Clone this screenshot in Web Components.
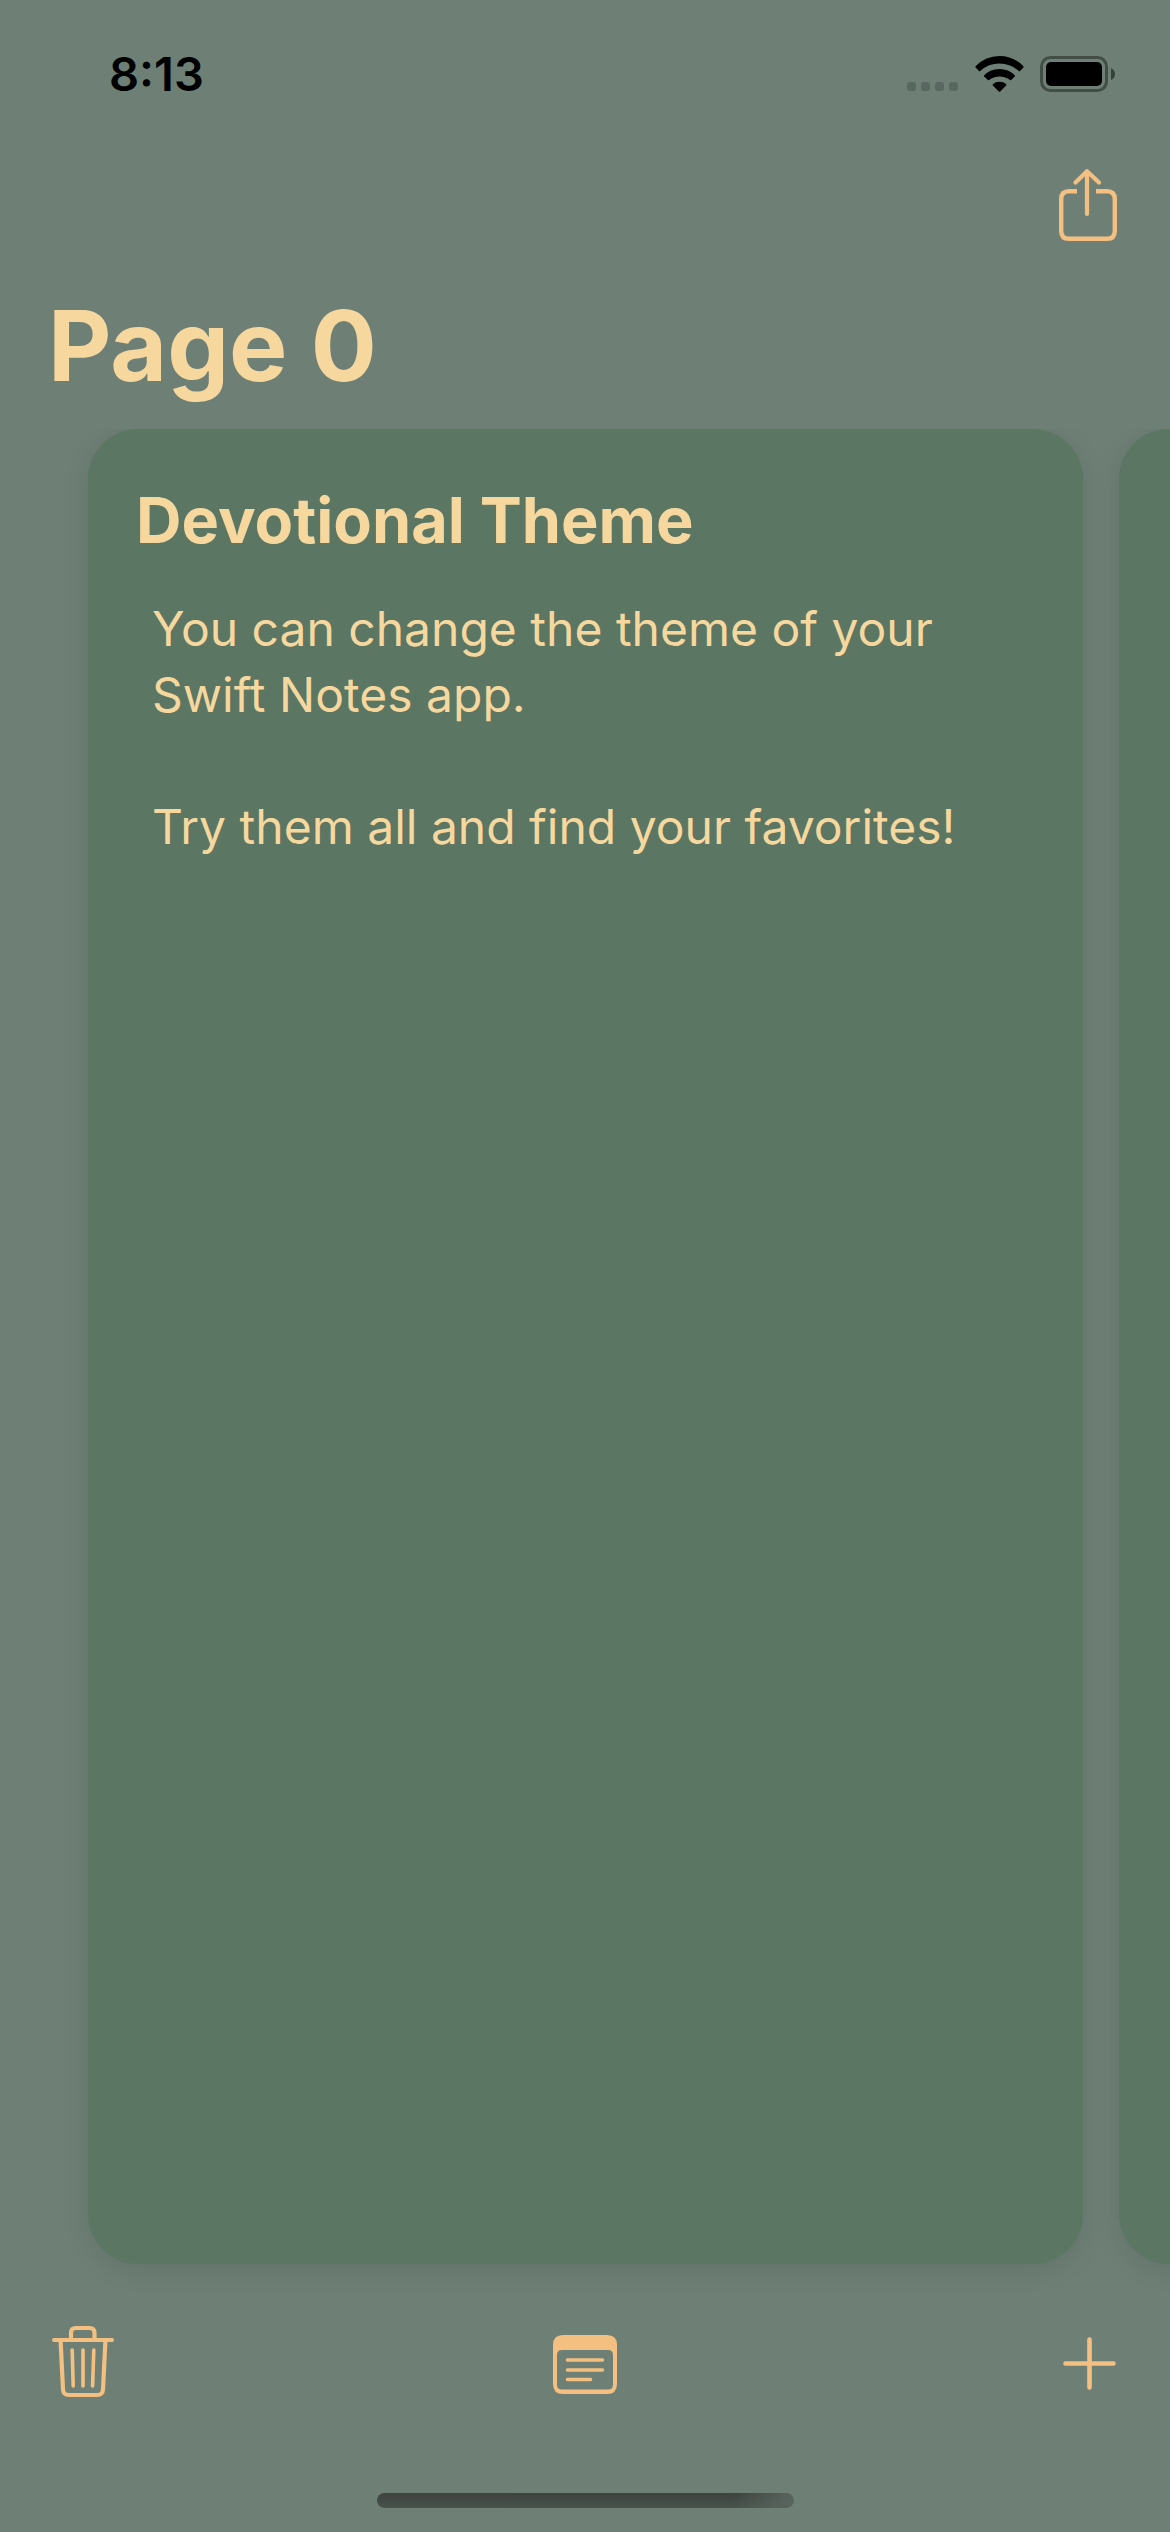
<!DOCTYPE html>
<html lang="en">
<head>
<meta charset="utf-8">
<meta name="viewport" content="width=device-width, initial-scale=1">
<title>Swift Notes</title>
<style>
  :root {
    --page: #6e8076;
    --card: #5b7663;
    --text: #f6d89f;
    --accent: #f3c081;
  }
  body {
    margin: 0;
    background: var(--page);
    color: var(--text);
    font-family: Inter, "Liberation Sans", sans-serif;
  }
</style>
</head>
<body>
<notes-app></notes-app>

<script>
  class BaseElement extends HTMLElement {
    constructor() {
      super();
      this.attachShadow({ mode: "open" }).innerHTML = this.constructor.markup;
    }
  }

  class StatusBar extends BaseElement {
    static markup = `
      <style>
        :host { display: flex; justify-content: space-between; align-items: center; height: 148px; padding: 0 54px 0 109px; box-sizing: border-box; color: #000; }
        time { font-size: 47px; line-height: 56px; font-weight: 600; }
        .icons { display: flex; align-items: center; gap: 16px; }
        svg { display: block; }
      </style>
      <time>8:13</time>
      <div class="icons">
        <svg width="52" height="36" viewBox="0 0 52 36" aria-hidden="true">
          <g fill="#586860">
            <rect x="0" y="26" width="9" height="9" rx="3"/><rect x="14" y="26" width="9" height="9" rx="3"/>
            <rect x="28" y="26" width="9" height="9" rx="3"/><rect x="42" y="26" width="9" height="9" rx="3"/>
          </g>
        </svg>
        <svg width="49" height="36" viewBox="0 0 49 36" aria-hidden="true">
          <path d="M0.6 10.2Q10.5 0 24.5 0T48.400 10.2Q48.900 10.800 48.400 11.400L45 15Q44.400 15.500 43.800 15Q35.500 7.600 24.500 7.600T5.200 15Q4.600 15.500 4 15L0.600 11.400Q0.100 10.800 0.600 10.200Z"/>
          <path d="M9.200 19.200Q15.500 13 24.500 13T39.800 19.200Q40.300 19.800 39.800 20.400L36.200 24Q35.600 24.500 35 24Q30.500 20.400 24.500 20.400T14 24Q13.400 24.500 12.800 24L9.200 20.400Q8.700 19.800 9.200 19.200Z"/>
          <path d="M17.900 28Q20.600 25.700 24.500 25.700T31.100 28Q31.700 28.700 31.100 29.400L25.200 35.400Q24.500 36 23.800 35.400L17.900 29.400Q17.300 28.700 17.900 28Z"/>
        </svg>
        <svg width="76" height="36" viewBox="0 0 76 36" aria-hidden="true">
          <rect x="1.500" y="1.500" width="65" height="33" rx="9" fill="none" stroke="#000" stroke-opacity=".4" stroke-width="3"/>
          <rect x="6" y="6" width="56" height="24" rx="5"/>
          <path d="M71 12Q75 14 75 18T71 24Z" fill-opacity=".5"/>
        </svg>
      </div>`;
  }

  class IconButton extends BaseElement {
    static markup = `
      <style>
        :host { display: block; }
        button { display: block; margin: 0; padding: 0; border: 0; background: none; color: var(--accent); }
      </style>
      <button type="button"><slot></slot></button>`;
    connectedCallback() {
      this.shadowRoot.querySelector("button").setAttribute("aria-label", this.getAttribute("label"));
    }
  }

  class NoteCard extends BaseElement {
    static markup = `
      <style>
        :host { display: block; flex: 0 0 calc(100% - 87px); box-sizing: border-box; padding: 51px 48px; border-radius: 50px; background: var(--card); box-shadow: 0 6px 26px rgba(0, 0, 0, .1); }
        h2 { margin: 0 0 36px; font-size: 63px; line-height: 80px; font-weight: 700; }
        .body { padding: 0 16px; font-size: 48px; line-height: 66px; }
      </style>
      <h2><slot name="title"></slot></h2>
      <div class="body"><slot></slot></div>`;
  }

  class NotesApp extends BaseElement {
    static markup = `
      <style>
        :host { display: flex; flex-direction: column; min-height: 100vh; }
        header { display: flex; justify-content: flex-end; padding: 18px 52px 0; height: 134px; box-sizing: border-box; }
        h1 { margin: 0; padding: 0 48px; font-size: 98px; line-height: 127px; font-weight: 700; height: 147px; box-sizing: border-box; }
        main { flex: 1; display: flex; gap: 36px; padding: 0 0 36px 88px; overflow: hidden; }
        p { margin: 0; }
        p + p { margin-top: 66px; }
        nav { display: flex; justify-content: space-between; align-items: center; padding: 0 51px; height: 126px; }
        footer { display: flex; justify-content: center; height: 106px; box-sizing: border-box; padding-top: 67px; }
        .home { width: 417px; height: 15px; border-radius: 8px; background: linear-gradient(100deg, #3d413d00 85%, #59665f 100%), linear-gradient(#3d423e, #48534c); }
        svg { display: block; fill: none; stroke: currentColor; stroke-linecap: round; stroke-linejoin: round; }
      </style>
      <status-bar></status-bar>
      <header>
        <icon-button label="Share">
          <svg width="60" height="76" viewBox="0 0 60 76" stroke-width="4.400">
            <path d="M19 25.200H11Q3.200 25.200 3.200 33V65Q3.200 72.800 11 72.800H49Q56.800 72.800 56.800 65V33Q56.800 25.200 49 25.200H38" stroke-linecap="butt"/>
            <path d="M29 48V5.500M17.500 16.500L29 5.200L41 16.500" stroke-width="4.200"/>
          </svg>
        </icon-button>
      </header>
      <h1>Page 0</h1>
      <main>
        <note-card>
          <span slot="title">Devotional Theme</span>
          <p>You can change the theme of your Swift Notes app.</p>
          <p>Try them all and find your favorites!</p>
        </note-card>
        <note-card></note-card>
      </main>
      <nav>
        <icon-button label="Delete note">
          <svg width="64" height="78" viewBox="0 0 64 78" stroke-width="4.200">
            <path d="M3 16H61" stroke-width="4"/>
            <path d="M20 15V9Q20 4 25 4H38.500Q43.500 4 43.500 9V15"/>
            <path d="M9.600 17L12 65.500Q12.300 71 18 71H46Q51.700 71 52 65.500L54.400 17"/>
            <path d="M21.200 26L22.200 62M32 26V62M42.800 26L41.600 62" stroke-width="3.600"/>
          </svg>
        </icon-button>
        <icon-button label="All notes">
          <svg width="64" height="64" viewBox="0 -4 64 64">
            <path d="M10 0H54Q64 0 64 10V49Q64 59 54 59H10Q0 59 0 49V10Q0 0 10 0ZM9 15Q4 15 4 20V49.500Q4 54.500 9 54.500H55Q60 54.500 60 49.500V20Q60 15 55 15Z" fill="currentColor" fill-rule="evenodd" stroke="none"/>
            <path d="M14.500 25H49.500M14.500 35H49.500M14.500 44.500H37.500" stroke-width="3.600"/>
          </svg>
        </icon-button>
        <icon-button label="Add note">
          <svg width="64" height="64" viewBox="0 0 64 64" stroke-width="4.600">
            <path d="M10.500 32.500H58.500M34.500 8.500V56.500"/>
          </svg>
        </icon-button>
      </nav>
      <footer><div class="home"></div></footer>`;
  }

  customElements.define("status-bar", StatusBar);
  customElements.define("icon-button", IconButton);
  customElements.define("note-card", NoteCard);
  customElements.define("notes-app", NotesApp);
</script>
</body>
</html>
